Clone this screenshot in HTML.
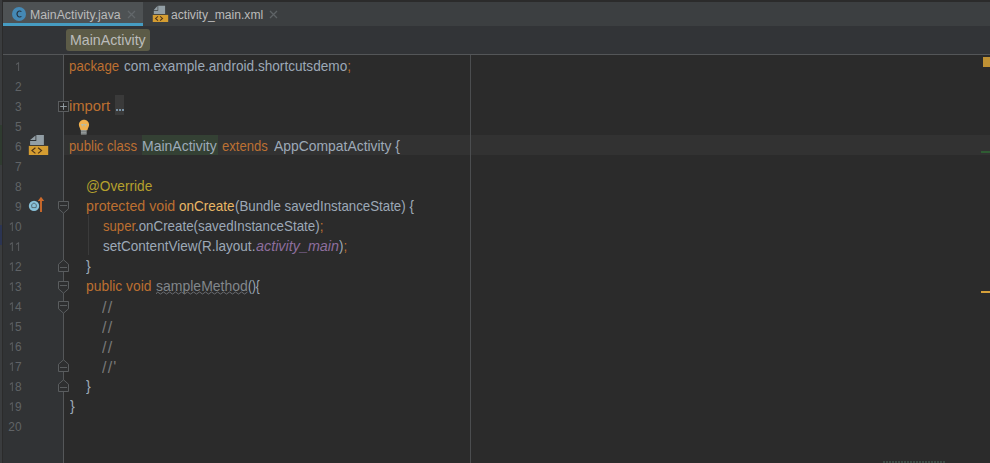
<!DOCTYPE html>
<html><head><meta charset="utf-8">
<style>
html,body{margin:0;padding:0;}
body{width:990px;height:463px;overflow:hidden;position:relative;background:#2B2B2B;font-family:"Liberation Sans",sans-serif;}
.a{position:absolute;}
.tabtxt{position:absolute;font-size:12.3px;color:#BBBBBB;white-space:pre;line-height:14px;}
.ln{position:absolute;left:0;width:21.5px;font-size:13.2px;color:#606366;line-height:20px;text-align:right;white-space:pre;transform:scaleX(0.9);transform-origin:100% 0;}
.code{position:absolute;font-size:14.3px;line-height:20px;color:#A9B7C6;white-space:pre;transform-origin:0 0;opacity:0.9;}
.kw{color:#CC7832;}
.an{color:#C4AE2E;}
.fn{color:#FFC66D;}
.st{color:#9876AA;font-style:italic;}
.cm{color:#808080;}
.un{color:#8C9196;}
</style></head><body>
<div class="a" style="left:0px;top:0px;width:990px;height:2px;background:#2B2B2B;"></div>
<div class="a" style="left:0px;top:2px;width:990px;height:24px;background:#3C3F41;"></div>
<div class="a" style="left:3px;top:2px;width:140px;height:21px;background:#4E5254;"></div>
<div class="a" style="left:3px;top:23px;width:140px;height:3px;background:#469CC2;"></div>
<svg class="a" style="left:10px;top:5px" width="18" height="18" viewBox="0 0 18 18">
<circle cx="9" cy="9" r="7" fill="#4589B5"/>
<path d="M11.4,6.6 A2.7,3 0 1 0 11.4,11.4" stroke="#253442" stroke-width="1.15" fill="none"/>
</svg>
<div class="tabtxt" style="left:30px;top:8px;">MainActivity.java</div>
<svg class="a" style="left:127px;top:10px" width="9" height="9" viewBox="0 0 9 9"><path d="M1,1 L8,8 M8,1 L1,8" stroke="#62676A" stroke-width="1.3"/></svg>
<svg class="a" style="left:152px;top:5px" width="18" height="18" viewBox="0 0 18 18">
<polygon points="6.2,0.85 13.1,0.85 13.1,8.9 1.8,8.9 1.8,5.7 6.2,5.7" fill="#929EA5"/>
<polygon points="1.8,4.9 5.6,0.85 5.6,4.9" fill="#929EA5"/>
<rect x="0.75" y="9.9" width="15.45" height="7.1" fill="#D59D31"/>
<path d="M6,11.3 L3.6,13.4 L6,15.6 M8.1,11.3 L10.5,13.4 L8.1,15.6" stroke="#4F3418" stroke-width="1.1" fill="none"/>
</svg>
<div class="tabtxt" style="left:171px;top:8px;transform:scaleX(0.985);transform-origin:0 0;">activity_main.xml</div>
<svg class="a" style="left:269px;top:10px" width="9" height="9" viewBox="0 0 9 9"><path d="M1,1 L8,8 M8,1 L1,8" stroke="#5E6366" stroke-width="1.3"/></svg>
<div class="a" style="left:3px;top:26px;width:987px;height:28px;background:#323437;"></div>
<div class="a" style="left:66px;top:29px;width:84px;height:22px;background:#5C5B47;border-radius:3px;"></div>
<div class="a" style="left:70px;top:32px;font-size:14.2px;line-height:16px;color:#BBBBBB;white-space:pre;">MainActivity</div>
<div class="a" style="left:3px;top:54px;width:987px;height:1px;background:#545658;"></div>
<div class="a" style="left:3px;top:55px;width:60px;height:408px;background:#313335;"></div>
<div class="a" style="left:64px;top:55px;width:926px;height:408px;background:#2B2B2B;"></div>
<div class="a" style="left:64px;top:135px;width:926px;height:20px;background:#323232;"></div>
<div class="a" style="left:470px;top:55px;width:1px;height:408px;background:#4B4D4F;"></div>
<div class="a" style="left:63px;top:55px;width:1px;height:408px;background:#555759;"></div>
<div class="a" style="left:0px;top:0px;width:2px;height:463px;background:#3A3C3E;"></div>
<div class="a" style="left:2px;top:0px;width:1px;height:463px;background:#2B2B2B;"></div>
<div class="a" style="left:0px;top:125px;width:2px;height:40px;background:#2F3B30;"></div>
<div class="a" style="left:0px;top:225px;width:2px;height:20px;background:#2B3452;"></div>
<div class="ln" style="top:57px"><svg width="7.34" height="9.3" viewBox="0 0 7.34 9.3" style="vertical-align:baseline"><path d="M4.3,0.3 V9.3 M4.3,0.6 L1.6,2.5" stroke="#5C5F62" stroke-width="1.05" fill="none"/></svg></div>
<div class="ln" style="top:77px">2</div>
<div class="ln" style="top:97px">3</div>
<div class="ln" style="top:117px">5</div>
<div class="ln" style="top:137px">6</div>
<div class="ln" style="top:157px">7</div>
<div class="ln" style="top:177px">8</div>
<div class="ln" style="top:197px">9</div>
<div class="ln" style="top:217px"><svg width="7.34" height="9.3" viewBox="0 0 7.34 9.3" style="vertical-align:baseline"><path d="M4.3,0.3 V9.3 M4.3,0.6 L1.6,2.5" stroke="#5C5F62" stroke-width="1.05" fill="none"/></svg>0</div>
<div class="ln" style="top:237px"><svg width="7.34" height="9.3" viewBox="0 0 7.34 9.3" style="vertical-align:baseline"><path d="M4.3,0.3 V9.3 M4.3,0.6 L1.6,2.5" stroke="#5C5F62" stroke-width="1.05" fill="none"/></svg><svg width="7.34" height="9.3" viewBox="0 0 7.34 9.3" style="vertical-align:baseline"><path d="M4.3,0.3 V9.3 M4.3,0.6 L1.6,2.5" stroke="#5C5F62" stroke-width="1.05" fill="none"/></svg></div>
<div class="ln" style="top:257px"><svg width="7.34" height="9.3" viewBox="0 0 7.34 9.3" style="vertical-align:baseline"><path d="M4.3,0.3 V9.3 M4.3,0.6 L1.6,2.5" stroke="#5C5F62" stroke-width="1.05" fill="none"/></svg>2</div>
<div class="ln" style="top:277px"><svg width="7.34" height="9.3" viewBox="0 0 7.34 9.3" style="vertical-align:baseline"><path d="M4.3,0.3 V9.3 M4.3,0.6 L1.6,2.5" stroke="#5C5F62" stroke-width="1.05" fill="none"/></svg>3</div>
<div class="ln" style="top:297px"><svg width="7.34" height="9.3" viewBox="0 0 7.34 9.3" style="vertical-align:baseline"><path d="M4.3,0.3 V9.3 M4.3,0.6 L1.6,2.5" stroke="#5C5F62" stroke-width="1.05" fill="none"/></svg>4</div>
<div class="ln" style="top:317px"><svg width="7.34" height="9.3" viewBox="0 0 7.34 9.3" style="vertical-align:baseline"><path d="M4.3,0.3 V9.3 M4.3,0.6 L1.6,2.5" stroke="#5C5F62" stroke-width="1.05" fill="none"/></svg>5</div>
<div class="ln" style="top:337px"><svg width="7.34" height="9.3" viewBox="0 0 7.34 9.3" style="vertical-align:baseline"><path d="M4.3,0.3 V9.3 M4.3,0.6 L1.6,2.5" stroke="#5C5F62" stroke-width="1.05" fill="none"/></svg>6</div>
<div class="ln" style="top:357px"><svg width="7.34" height="9.3" viewBox="0 0 7.34 9.3" style="vertical-align:baseline"><path d="M4.3,0.3 V9.3 M4.3,0.6 L1.6,2.5" stroke="#5C5F62" stroke-width="1.05" fill="none"/></svg>7</div>
<div class="ln" style="top:377px"><svg width="7.34" height="9.3" viewBox="0 0 7.34 9.3" style="vertical-align:baseline"><path d="M4.3,0.3 V9.3 M4.3,0.6 L1.6,2.5" stroke="#5C5F62" stroke-width="1.05" fill="none"/></svg>8</div>
<div class="ln" style="top:397px"><svg width="7.34" height="9.3" viewBox="0 0 7.34 9.3" style="vertical-align:baseline"><path d="M4.3,0.3 V9.3 M4.3,0.6 L1.6,2.5" stroke="#5C5F62" stroke-width="1.05" fill="none"/></svg>9</div>
<div class="ln" style="top:417px">20</div>
<div class="code kw" style="left:69.47px;top:56px;transform:scaleX(0.9283)">package</div>
<div class="code " style="left:124.4px;top:56px;transform:scaleX(0.9521)">com.example.android.shortcutsdemo<span class="kw">;</span></div>
<div class="code kw" style="left:69.47px;top:96px;transform:scaleX(1.0333)">import</div>
<div class="a" style="left:115px;top:95px;width:9px;height:20px;background:#3A3A3A;"></div>
<div class="a" style="left:116px;top:109px;width:8px;height:2px;background:repeating-linear-gradient(90deg,#7890A3 0 2px,transparent 2px 3px);"></div>
<div class="a" style="left:142px;top:135px;width:76px;height:20px;background:#344134;"></div>
<div class="code kw" style="left:69.48px;top:136px;transform:scaleX(0.9205)">public class</div>
<div class="code " style="left:142.02px;top:136px;transform:scaleX(0.98)">MainActivity</div>
<div class="code kw" style="left:222.4px;top:136px;transform:scaleX(0.912)">extends</div>
<div class="code " style="left:273.6px;top:136px;transform:scaleX(0.9723)">AppCompatActivity {</div>
<div class="code an" style="left:86.04px;top:176px;transform:scaleX(0.9559)">@Override</div>
<div class="code kw" style="left:85.61px;top:196px;transform:scaleX(0.9932)">protected void</div>
<div class="code fn" style="left:179.4px;top:196px;transform:scaleX(0.9424)">onCreate</div>
<div class="code " style="left:234.57px;top:196px;transform:scaleX(0.9297)">(Bundle savedInstanceState) {</div>
<div class="code kw" style="left:102.6px;top:216px;transform:scaleX(0.9167)">super</div>
<div class="code " style="left:135.47px;top:216px;transform:scaleX(0.933)">.onCreate(savedInstanceState)<span class="kw">;</span></div>
<div class="code " style="left:102.6px;top:236px;transform:scaleX(0.9462)">setContentView(R.layout.</div>
<div class="code st" style="left:255.6px;top:236px;transform:scaleX(1.0049)">activity_main</div>
<div class="code " style="left:338.5px;top:236px;transform:scaleX(0.9375)">)<span class="kw">;</span></div>
<div class="code " style="left:86px;top:256px;transform:scaleX(1.0)">}</div>
<div class="code kw" style="left:86.03px;top:276px;transform:scaleX(0.9697)">public void</div>
<div class="code un" style="left:156.4px;top:276px;transform:scaleX(0.9796)">sampleMethod</div>
<div class="code " style="left:247.68px;top:276px;transform:scaleX(0.8214)">(){</div>
<div class="code cm" style="left:102px;top:297.8px;font-size:16px;letter-spacing:1.2px">//</div>
<div class="code cm" style="left:102px;top:317.8px;font-size:16px;letter-spacing:1.2px">//</div>
<div class="code cm" style="left:102px;top:337.8px;font-size:16px;letter-spacing:1.2px">//</div>
<div class="code cm" style="left:102px;top:357.8px;font-size:16px;letter-spacing:1.2px">//'</div>
<div class="code " style="left:86px;top:376px;transform:scaleX(1.0)">}</div>
<div class="code " style="left:70px;top:396px;transform:scaleX(1.0)">}</div>
<div class="a" style="left:88px;top:215px;width:1px;height:40px;background:#3B3B3B;"></div>
<svg class="a" style="left:156px;top:291px" width="93" height="4" viewBox="0 0 93 4"><path d="M0,3 L1.5,1 L4.5,3 L7.5,1 L10.5,3 L13.5,1 L16.5,3 L19.5,1 L22.5,3 L25.5,1 L28.5,3 L31.5,1 L34.5,3 L37.5,1 L40.5,3 L43.5,1 L46.5,3 L49.5,1 L52.5,3 L55.5,1 L58.5,3 L61.5,1 L64.5,3 L67.5,1 L70.5,3 L73.5,1 L76.5,3 L79.5,1 L82.5,3 L85.5,1 L88.5,3 L91.5,1" stroke="#6F7377" stroke-width="0.9" fill="none"/></svg>
<svg class="a" style="left:57px;top:100px" width="13" height="13" viewBox="0 0 13 13">
<rect x="1.5" y="1.5" width="10" height="10" fill="#2B2B2B" stroke="#5A5D5F" stroke-width="1"/>
<path d="M3.2,6.5 H9.8 M6.5,3.2 V9.8" stroke="#9AA4A9" stroke-width="0.9"/></svg>
<svg class="a" style="left:77px;top:118px" width="14" height="18" viewBox="0 0 14 18">
<path d="M7,1.8 C9.9,1.8 12.1,4 12.1,6.8 C12.1,8.8 11,9.8 10.4,12.2 L3.6,12.2 C3,9.8 1.9,8.8 1.9,6.8 C1.9,4 4.1,1.8 7,1.8 Z" fill="#F2B14E"/>
<path d="M4,6.7 H9.9 M5.3,6.7 V8.6 M8.3,6.7 V8.6" stroke="#9CC0CC" stroke-width="0.75" fill="none"/>
<rect x="3.9" y="12.2" width="5.7" height="4.3" fill="#A3AAAA"/>
<path d="M3.9,13.65 H9.6 M3.9,15.25 H9.6" stroke="#515757" stroke-width="0.55"/>
</svg>
<svg class="a" style="left:28px;top:134px" width="22" height="22" viewBox="0 0 22 22">
<polygon points="8.3,1 15.9,1 15.9,11 2.1,11 2.1,6.9 8.3,6.9" fill="#929EA5"/>
<polygon points="2.1,6.1 7.5,1.4 7.5,6.1" fill="#929EA5"/>
<rect x="0.8" y="11.9" width="19.4" height="9.1" fill="#D59D31"/>
<path d="M7.4,13.8 L4,16.6 L7.4,19.4 M10.1,13.8 L13.5,16.6 L10.1,19.4" stroke="#4F3418" stroke-width="1.2" fill="none"/>
</svg>
<svg class="a" style="left:27px;top:196px" width="19" height="18" viewBox="0 0 19 18">
<circle cx="7" cy="9.9" r="5.2" fill="#88C1D9"/>
<path d="M4.9,11.6 L4.6,8.7 L7,6.9 L9.4,8.7 L9.1,11.6 Z" stroke="#4A5860" stroke-width="0.8" fill="none"/>
<path d="M14,16 V4.5" stroke="#CC6A2C" stroke-width="1.9"/>
<polygon points="10.8,5 14,0.8 17.2,5" fill="#CC6A2C"/>
</svg>
<svg class="a" style="left:57px;top:200.5px" width="13" height="14" viewBox="0 0 13 14">
<path d="M1.5,0.5 H11.5 V7.8 L6.5,12.2 L1.5,7.8 Z" fill="#2E2F30" stroke="#5A5D5F" stroke-width="1"/>
<path d="M3,4.5 H10" stroke="#5A5D5F" stroke-width="1"/></svg>
<svg class="a" style="left:57px;top:259px" width="13" height="14" viewBox="0 0 13 14">
<path d="M1.5,12.5 H11.5 V5.2 L6.5,0.8 L1.5,5.2 Z" fill="#2E2F30" stroke="#5A5D5F" stroke-width="1"/>
<path d="M3,8.5 H10" stroke="#5A5D5F" stroke-width="1"/></svg>
<svg class="a" style="left:57px;top:280.5px" width="13" height="14" viewBox="0 0 13 14">
<path d="M1.5,0.5 H11.5 V7.8 L6.5,12.2 L1.5,7.8 Z" fill="#2E2F30" stroke="#5A5D5F" stroke-width="1"/>
<path d="M3,4.5 H10" stroke="#5A5D5F" stroke-width="1"/></svg>
<svg class="a" style="left:57px;top:300.5px" width="13" height="14" viewBox="0 0 13 14">
<path d="M1.5,0.5 H11.5 V7.8 L6.5,12.2 L1.5,7.8 Z" fill="#2E2F30" stroke="#5A5D5F" stroke-width="1"/>
<path d="M3,4.5 H10" stroke="#5A5D5F" stroke-width="1"/></svg>
<svg class="a" style="left:57px;top:359px" width="13" height="14" viewBox="0 0 13 14">
<path d="M1.5,12.5 H11.5 V5.2 L6.5,0.8 L1.5,5.2 Z" fill="#2E2F30" stroke="#5A5D5F" stroke-width="1"/>
<path d="M3,8.5 H10" stroke="#5A5D5F" stroke-width="1"/></svg>
<svg class="a" style="left:57px;top:379px" width="13" height="14" viewBox="0 0 13 14">
<path d="M1.5,12.5 H11.5 V5.2 L6.5,0.8 L1.5,5.2 Z" fill="#2E2F30" stroke="#5A5D5F" stroke-width="1"/>
<path d="M3,8.5 H10" stroke="#5A5D5F" stroke-width="1"/></svg>
<div class="a" style="left:883px;top:461px;width:62px;height:2px;background:repeating-linear-gradient(90deg,#3C4B45 0 2px,transparent 2px 3px);"></div>
<div class="a" style="left:983px;top:57px;width:7px;height:10px;background:#BF9134;"></div>
<div class="a" style="left:981px;top:151px;width:9px;height:2px;background:#2F5C33;"></div>
<div class="a" style="left:981px;top:291px;width:9px;height:2px;background:#D6A03A;"></div>
</body></html>
